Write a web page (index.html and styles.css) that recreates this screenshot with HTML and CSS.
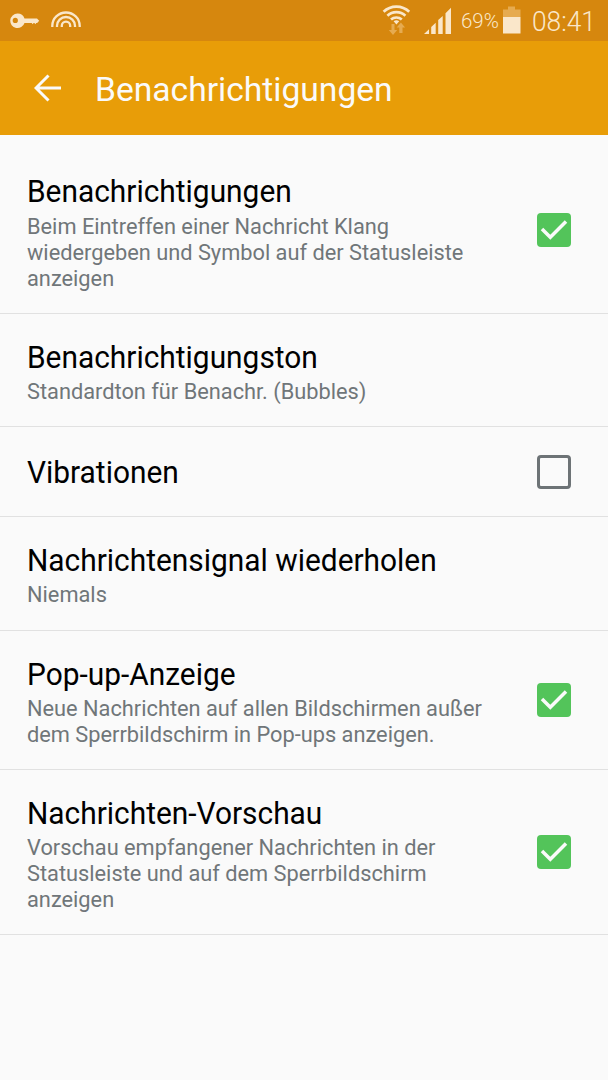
FILE: index.html
```html
<!DOCTYPE html>
<html lang="de">
<head>
<meta charset="utf-8">
<title>Benachrichtigungen</title>
<link rel="stylesheet" href="styles.css">
</head>
<body>
<div class="status">
  <svg class="key" width="30" height="16" viewBox="0 0 30 16"><path fill-rule="evenodd" d="M7.500 .5a7.300 7.300 0 0 1 7 5H27l2.200 2.200-2 2.300h-1l-.8 1.200-1-1.200h-.8l-.9 1.200-1-1.200h-7.200A7.300 7.300 0 1 1 7.500 .5zM5.300 4.800a2.600 2.600 0 1 0 0 5.200 2.600 2.600 0 0 0 0-5.200z"/></svg>
  <svg class="arcs" width="30" height="17" viewBox="0 0 30 17"><path d="M1.300 16v-1.200a13.700 13.300 0 0 1 27.400 0V16M6 16v-1.200a9 8.800 0 0 1 18 0V16M10.800 16v-1.200a4.200 4.200 0 0 1 8.400 0V16"/></svg>
  <svg class="wifi" width="30" height="32" viewBox="0 0 30 32"><path class="waves" d="M1.600 7.800a18.500 18.500 0 0 1 25.600 0M5.400 11.800a13 13 0 0 1 18 0M9 15.600a8 8 0 0 1 10.800 0"/><path d="M11.600 17.300q2.800-2 5.600 0l-2.800 3.200z"/><path class="dim" d="M9.500 20h3v6h2.700L11 31l-4.200-5h2.700zM17.300 29v-5.500h-2.600l4.200-5 4.200 5h-2.600V29z"/></svg>
  <svg class="signal" width="28" height="28" viewBox="0 0 28 28"><path d="M0 27 5 22.200V27zM7.200 20l4.500-4.200V27H7.200zM14.200 13l4.500-4V27h-4.500zM21.500 6.300 27 .8V27h-5.500z"/></svg>
  <span class="pct">69%</span>
  <svg class="battery" width="18" height="28" viewBox="0 0 18 28"><path class="dim" d="M0 3.500h5V.5h7v3h5.500V11H0z"/><path d="M0 11h17.500v16.500H0z"/></svg>
  <span class="time">08:41</span>
</div>
<header class="bar">
  <svg width="28" height="28" viewBox="0 0 28 28"><path d="M27 14H2.500M14.500 1.500 2 14l12.500 12.500"/></svg>
  <h1>Benachrichtigungen</h1>
</header>
<main class="list">
  <section class="row first">
    <div><h2>Benachrichtigungen</h2><p>Beim Eintreffen einer Nachricht Klang<br>wiedergeben und Symbol auf der Statusleiste<br>anzeigen</p></div>
    <span class="box on"><svg width="34" height="34" viewBox="0 0 34 34"><path d="m5 16 8.300 8.300L29 8.500"/></svg></span>
  </section>
  <section class="row">
    <div><h2>Benachrichtigungston</h2><p>Standardton für Benachr. (Bubbles)</p></div>
  </section>
  <section class="row single">
    <div><h2>Vibrationen</h2></div>
    <span class="box"></span>
  </section>
  <section class="row repeat">
    <div><h2>Nachrichtensignal wiederholen</h2><p>Niemals</p></div>
  </section>
  <section class="row">
    <div><h2>Pop-up-Anzeige</h2><p>Neue Nachrichten auf allen Bildschirmen außer<br>dem Sperrbildschirm in Pop-ups anzeigen.</p></div>
    <span class="box on"><svg width="34" height="34" viewBox="0 0 34 34"><path d="m5 16 8.300 8.300L29 8.500"/></svg></span>
  </section>
  <section class="row">
    <div><h2>Nachrichten-Vorschau</h2><p>Vorschau empfangener Nachrichten in der<br>Statusleiste und auf dem Sperrbildschirm<br>anzeigen</p></div>
    <span class="box on"><svg width="34" height="34" viewBox="0 0 34 34"><path d="m5 16 8.300 8.300L29 8.500"/></svg></span>
  </section>
</main>
</body>
</html>
```
FILE: styles.css
```css
* { box-sizing: border-box; margin: 0; }
body { background: #fafafa; font-family: Roboto, sans-serif; min-height: 1080px; white-space: nowrap; }
svg { display: block; flex: none; }
.status { height: 41px; background: #d6870e; display: flex; align-items: flex-start; padding-left: 10px; color: #fae7ca; fill: #fae7ca; }
.key { margin-top: 13px; }
.arcs { margin: 11px 0 0 11px; fill: none; stroke: #fae7ca; stroke-width: 2.300; }
.wifi { margin: 4px 0 0 301px; overflow: visible; }
.waves { fill: none; stroke: #fae7ca; stroke-width: 2.700; }
.dim { fill: #e6ab50; }
.signal { margin: 7px 0 0 12px; }
.pct { font-size: 20.500px; font-weight: 300; line-height: 24px; margin: 9px 0 0 9px; width: 38px; }
.battery { margin: 6px 0 0 4px; }
.time { font-size: 27px; font-weight: 300; line-height: 32px; margin: 6px 0 0 11px; transform: scaleX(.975); transform-origin: left; }
.bar { height: 94px; background: #e89d08; display: flex; align-items: center; padding-left: 34px; color: #fafafa; }
.bar svg { fill: none; stroke: #fafafa; stroke-width: 3; }
.bar h1 { font-size: 34px; font-weight: 400; line-height: 40px; margin: 2px 0 0 33px; transform: scaleX(.988); transform-origin: left; }
.list { padding-top: 14px; }
.row { border-bottom: 1px solid #e1e1e1; display: flex; align-items: center; justify-content: space-between; padding: 26px 37px 21px 27px; }
.row h2 { font-size: 31px; font-weight: 400; line-height: 36px; color: #000; margin-bottom: 3px; transform: scaleX(.964); transform-origin: left; }
.row p { font-size: 22px; line-height: 26px; color: #707679; transform: scaleX(.99); transform-origin: left; }
.row.first { padding-top: 25px; padding-bottom: 21px; }
.row.first h2 { margin-bottom: 4px; }
.row.repeat { padding-bottom: 22px; }
.row.single { height: 90px; padding-top: 1px; padding-bottom: 0; }
.single h2 { margin: 2px 0 0; }
.box { width: 34px; height: 34px; border: 3px solid #6d7376; border-radius: 4px; flex: none; }
.box.on { border: 0; background: #53c45a; margin-bottom: 6px; }
.single .box { margin-bottom: 1px; }
.box path { fill: none; stroke: #fafafa; stroke-width: 3.500; }
```
